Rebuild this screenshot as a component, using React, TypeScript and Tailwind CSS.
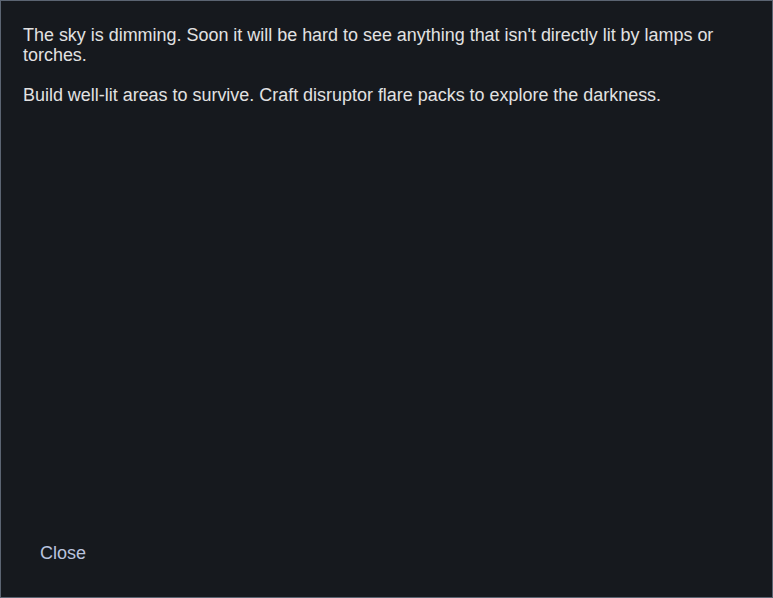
export default function App() {
  return (
    <div
      className="h-[598px] w-[773px] border border-[#5b6472] bg-[#16191e] flex flex-col px-[22px] pt-[24px] pb-[27px] text-[17.95px] leading-[20px] text-[#e2e2e2]"
      style={{ fontFamily: '"Liberation Sans", Arial, sans-serif' }}
    >
      <p>
        The sky is dimming. Soon it will be hard to see anything that isn't directly lit by lamps or torches.
      </p>
      <p className="mt-[20px]">
        Build well-lit areas to survive. Craft disruptor flare packs to explore the darkness.
      </p>
      <div className="mt-auto">
        <button className="px-[17px] py-[6px] text-[18px] leading-[22px] text-[#b9c3de]">Close</button>
      </div>
    </div>
  );
}
